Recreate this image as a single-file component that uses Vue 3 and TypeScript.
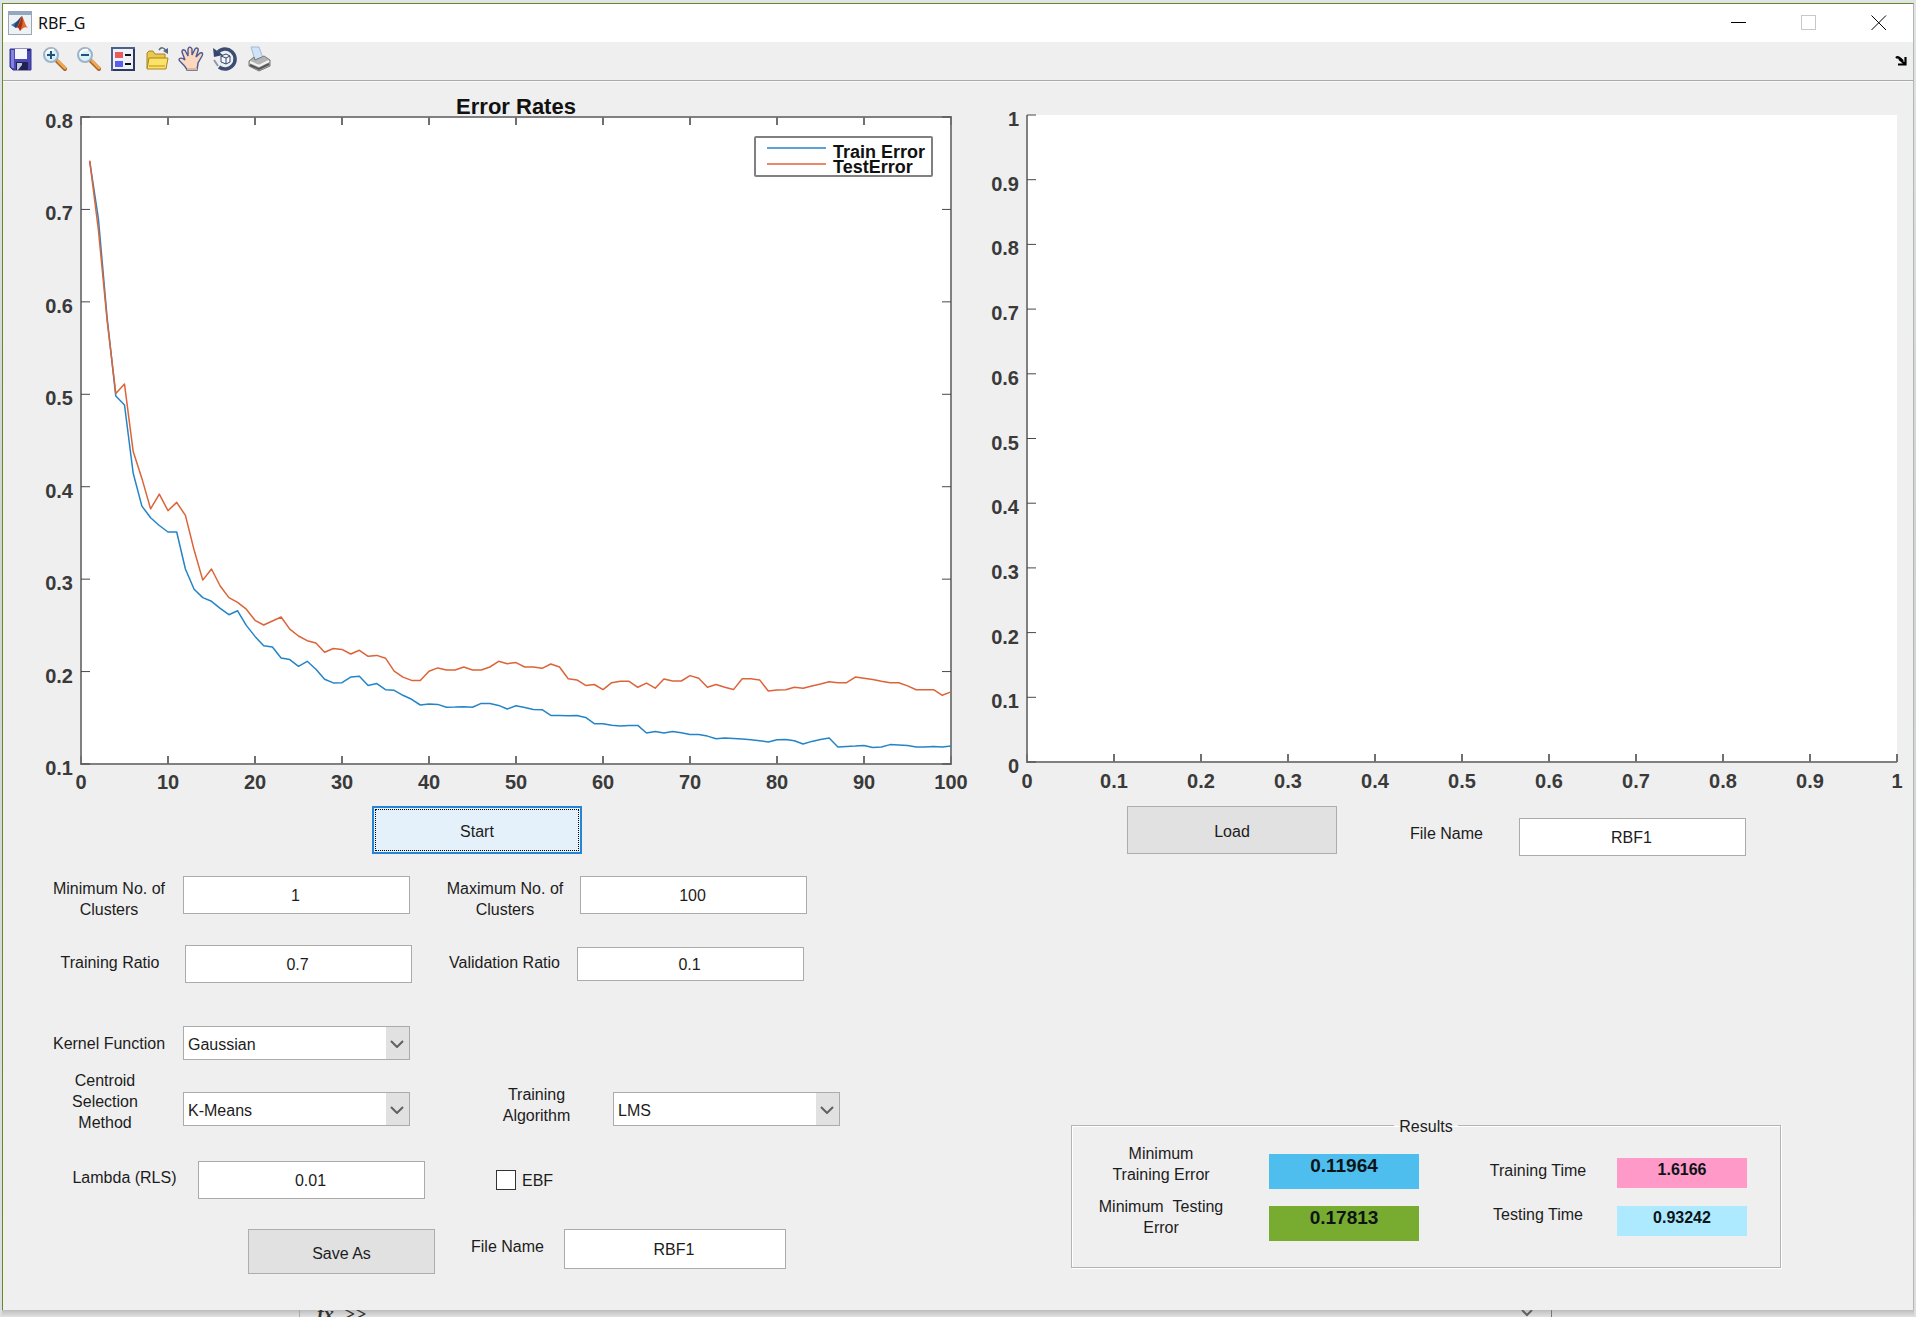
<script setup lang="ts">
import { ref } from 'vue'

interface Tick {
  label: string
  pos: number
}

const trainError: number[] = [
  0.752, 0.69, 0.583, 0.498, 0.4884, 0.4145, 0.379, 0.3664, 0.358, 0.351,
  0.351, 0.311, 0.289, 0.28, 0.276, 0.2685, 0.2615, 0.2658, 0.25, 0.238,
  0.228, 0.2266, 0.2147, 0.213, 0.2057, 0.2111, 0.2025, 0.1916, 0.1877, 0.188,
  0.194, 0.195, 0.185, 0.187, 0.1804, 0.1797, 0.1743, 0.17, 0.1638, 0.1649,
  0.1645, 0.1613, 0.1616, 0.162, 0.1613, 0.1656, 0.1656, 0.1634, 0.1595, 0.163,
  0.161, 0.159, 0.1587, 0.1526, 0.1526, 0.1522, 0.1526, 0.1504, 0.1436, 0.1436,
  0.142, 0.141, 0.1418, 0.1418, 0.1335, 0.1353, 0.1335, 0.1353, 0.1338, 0.132,
  0.132, 0.1302, 0.1273, 0.128, 0.1277, 0.127, 0.1263, 0.1252, 0.1238, 0.1263,
  0.1266, 0.1252, 0.1216, 0.1245, 0.1266, 0.128, 0.1184, 0.119, 0.1194, 0.12,
  0.1177, 0.1184, 0.121, 0.1205, 0.12, 0.1184, 0.1184, 0.119, 0.1184, 0.1196,
]

const testError: number[] = [
  0.7527, 0.678, 0.58, 0.501, 0.511, 0.438, 0.409, 0.376, 0.392, 0.374,
  0.383, 0.369, 0.3315, 0.299, 0.311, 0.2926, 0.28, 0.275, 0.2675, 0.2555,
  0.2504, 0.2547, 0.259, 0.246, 0.2385, 0.2334, 0.231, 0.221, 0.225, 0.224,
  0.219, 0.223, 0.2165, 0.2175, 0.2145, 0.2004, 0.194, 0.1905, 0.1905, 0.2004,
  0.204, 0.2017, 0.2017, 0.205, 0.2017, 0.2017, 0.205, 0.2111, 0.2085, 0.2097,
  0.205, 0.205, 0.2035, 0.2082, 0.205, 0.1923, 0.191, 0.185, 0.186, 0.1805,
  0.188, 0.1895, 0.1895, 0.183, 0.1875, 0.182, 0.192, 0.1898, 0.1898, 0.1956,
  0.1928, 0.183, 0.186, 0.183, 0.1805, 0.1923, 0.1923, 0.191, 0.179, 0.1802,
  0.1804, 0.183, 0.182, 0.1845, 0.1866, 0.189, 0.188, 0.188, 0.194, 0.1927,
  0.1914, 0.1895, 0.188, 0.188, 0.1845, 0.1804, 0.1804, 0.1804, 0.1743, 0.178,
]

// Plot boxes, in the units of each chart's viewBox
const errors = { left: 78, right: 948, top: 34, bottom: 681 }
const blank = { left: 42, right: 912, top: 32, bottom: 679 }

const errorX = (n: number): number => errors.left + (n / 100) * (errors.right - errors.left)
const errorY = (v: number): number =>
  errors.bottom - ((v - 0.1) / 0.7) * (errors.bottom - errors.top)

const toPoints = (series: number[]): string =>
  series.map((v, i) => `${errorX(i + 1).toFixed(1)},${errorY(v).toFixed(1)}`).join(' ')

const errorXTicks: Tick[] = Array.from({ length: 11 }, (_, i) => ({
  label: String(i * 10),
  pos: errorX(i * 10),
}))
const errorYTicks: Tick[] = Array.from({ length: 8 }, (_, i) => ({
  label: ((i + 1) / 10).toFixed(1),
  pos: errorY((i + 1) / 10),
}))

const unitLabel = (i: number): string => (i % 10 === 0 ? String(i / 10) : (i / 10).toFixed(1))
const blankXTicks: Tick[] = Array.from({ length: 11 }, (_, i) => ({
  label: unitLabel(i),
  pos: blank.left + (i / 10) * (blank.right - blank.left),
}))
const blankYTicks: Tick[] = Array.from({ length: 11 }, (_, i) => ({
  label: unitLabel(i),
  pos: blank.bottom - (i / 10) * (blank.bottom - blank.top),
}))

const minClusters = ref('1')
const maxClusters = ref('100')
const trainingRatio = ref('0.7')
const validationRatio = ref('0.1')
const lambda = ref('0.01')
const saveName = ref('RBF1')
const loadName = ref('RBF1')
const kernel = ref('Gaussian')
const centroid = ref('K-Means')
const algorithm = ref('LMS')
const ebf = ref(false)
</script>

<template>
  <div class="desktop">
    <main class="window">
      <header class="titlebar">
        <svg class="app-icon" viewBox="0 0 24 24" aria-hidden="true">
          <rect x="0.5" y="0.5" width="23" height="23" fill="#eef2f6" stroke="#9aa8b6" />
          <rect x="1" y="1" width="22" height="3" fill="#93a9c0" />
          <path d="M3 14 L8 11 L11 13 L8 17 Z" fill="#3f79b5" />
          <path d="M8 11 C10 10 12 6 14 5 L11 14 L8 17 L6 15 Z" fill="#27486f" />
          <path d="M14 5 C16 8 17 14 20 17 C17 15 15 17 12 20 C11 17 10 16 8 17 C11 14 12 8 14 5 Z" fill="#e0692a" />
          <path d="M14 5 C15 9 15 14 12 20 C11 17 10 16 9 16 C12 13 13 8 14 5 Z" fill="#a5301a" />
        </svg>
        <h1 class="title">RBF_G</h1>
        <div class="window-buttons">
          <button type="button" aria-label="Minimize">
            <svg viewBox="0 0 16 16"><path d="M0 7.5H15" stroke="#000" fill="none" /></svg>
          </button>
          <button type="button" aria-label="Maximize" disabled>
            <svg viewBox="0 0 16 16"><rect x="0.5" y="0.5" width="14" height="14" stroke="#c8c8cc" fill="none" /></svg>
          </button>
          <button type="button" aria-label="Close">
            <svg viewBox="0 0 16 16"><path d="M0.5 0.5L15 15M15 0.5L0.5 15" stroke="#000" fill="none" /></svg>
          </button>
        </div>
      </header>

      <nav class="toolbar" aria-label="Figure tools">
        <button type="button" aria-label="Save figure">
          <svg viewBox="0 0 26 26">
            <path d="M2 3H23V24H5L2 21Z" fill="#4a48b4" stroke="#34328e" />
            <path d="M3 4H6V22H4L3 20Z" fill="#8583dc" />
            <rect x="7" y="3" width="12" height="10" fill="#f4f6fc" />
            <path d="M19 3H22V5H19Z" fill="#26246c" />
            <rect x="8" y="16" width="12" height="8" fill="#23224e" />
            <rect x="9" y="17" width="5" height="7" fill="#c4c8e4" />
            <path d="M10 24L14 19V24Z" fill="#23224e" />
          </svg>
        </button>
        <button type="button" aria-label="Zoom in">
          <svg viewBox="0 0 26 26">
            <path d="M15 15L23 23" stroke="#a9652a" stroke-width="4" stroke-linecap="round" />
            <path d="M16 15L23 22" stroke="#f0a850" stroke-width="2.500" stroke-linecap="round" />
            <circle cx="9" cy="9" r="7" fill="#d8f2fa" stroke="#9db3c6" stroke-width="2" />
            <path d="M4 8C5 5 8 3 12 4" stroke="#fff" stroke-width="2" fill="none" />
            <path d="M5 9H13M9 5V13" stroke="#26517c" stroke-width="2" />
          </svg>
        </button>
        <button type="button" aria-label="Zoom out">
          <svg viewBox="0 0 26 26">
            <path d="M15 15L23 23" stroke="#a9652a" stroke-width="4" stroke-linecap="round" />
            <path d="M16 15L23 22" stroke="#f0a850" stroke-width="2.500" stroke-linecap="round" />
            <circle cx="9" cy="9" r="7" fill="#d8f2fa" stroke="#9db3c6" stroke-width="2" />
            <path d="M4 8C5 5 8 3 12 4" stroke="#fff" stroke-width="2" fill="none" />
            <path d="M5 9H13" stroke="#26517c" stroke-width="2" />
          </svg>
        </button>
        <button type="button" aria-label="Insert legend">
          <svg viewBox="0 0 26 26">
            <rect x="2" y="2" width="22" height="22" fill="#eef0fa" stroke="#4e5f8c" stroke-width="2" />
            <path d="M24 3V24H3" fill="none" stroke="#2c3a62" stroke-width="2" />
            <rect x="5" y="6" width="8" height="6" fill="#e85a5e" />
            <rect x="5" y="15" width="8" height="6" fill="#5c5cf0" />
            <path d="M15 9H21M15 18H21" stroke="#111" stroke-width="2" />
          </svg>
        </button>
        <button type="button" aria-label="Open file">
          <svg viewBox="0 0 26 26">
            <path d="M3 22V7L5 5H9L11 8H21V12" fill="#e9c84a" stroke="#a88420" />
            <path d="M3 23L5 12H24L22 23Z" fill="#fbe36a" stroke="#a88420" />
            <path d="M5 20H21" stroke="#dfb93a" stroke-width="2" />
            <path d="M15 4C17 1 20 1 22 5" fill="none" stroke="#56677c" stroke-width="1.500" />
            <path d="M19 5L24 2V8Z" fill="#56677c" />
          </svg>
        </button>
        <button type="button" aria-label="Pan">
          <svg viewBox="0 0 26 26">
            <path
              d="M9 24C8 20 2 16 1 14C1 11 5 12 7 14L4 6C4 3 7 3 8 6L10 10L10 3C11 0 13 1 14 3L14 9L17 3C18 1 21 2 20 5L18 11L22 7C25 6 25 8 24 10L20 17C20 20 19 21 19 24Z"
              fill="#fbd8bf" stroke="#4c5a94" stroke-width="1.400"
            />
            <path d="M9 23H19" stroke="#e8b494" stroke-width="2" />
          </svg>
        </button>
        <button type="button" aria-label="Rotate">
          <svg viewBox="0 0 26 26">
            <path d="M6 6A10 10 0 1 1 7 21" fill="none" stroke="#3c4d74" stroke-width="3.500" />
            <path d="M1 2L2 11L11 9Z" fill="#34466e" />
            <path d="M2 14L6 20" stroke="#8c98b0" stroke-width="2" />
            <path d="M9 10L14 8L18 10V16L14 18L9 16ZM9 10L14 12L18 10M14 12V18" fill="#f3f6fc" stroke="#34466e" />
          </svg>
        </button>
        <button type="button" aria-label="Print">
          <svg viewBox="0 0 26 26">
            <path d="M5 1H13L17 12L9 14Z" fill="#cfe4fa" stroke="#a4b8d0" />
            <path d="M3 15L8 11L9 14L18 10L24 14V20L13 25L3 20Z" fill="#b4b4b4" stroke="#777" />
            <path d="M4 16L13 20L23 15" fill="none" stroke="#f4f4f4" stroke-width="2" />
            <path d="M4 19L13 23L23 18" fill="none" stroke="#555" stroke-width="2" />
          </svg>
        </button>
        <button type="button" class="dock" aria-label="Dock figure">
          <svg viewBox="0 0 12 10"><path d="M1 2C3 0 5 2 8 5M10.500 1V8.500H3M4 3L10 8" stroke="#000" stroke-width="2.200" fill="none" /></svg>
        </button>
      </nav>

      <div class="columns">
        <section class="column">
          <svg class="chart" viewBox="0 0 982 711" role="img" aria-label="Error Rates">
            <rect
              :x="errors.left" :y="errors.top" :width="errors.right - errors.left"
              :height="errors.bottom - errors.top" class="plot-box"
            />
            <text class="chart-title" x="513" y="31">Error Rates</text>
            <g v-for="t in errorXTicks" :key="'x' + t.label">
              <path
                class="tick-x"
                :d="`M${t.pos} ${errors.top}v8M${t.pos} ${errors.bottom}v-8`"
              />
              <text class="axis-text mid" :x="t.pos" :y="errors.bottom + 25">{{ t.label }}</text>
            </g>
            <g v-for="t in errorYTicks" :key="'y' + t.label">
              <path
                class="tick-y"
                :d="`M${errors.left} ${t.pos}h9M${errors.right} ${t.pos}h-9`"
              />
              <text class="axis-text end" :x="errors.left - 8" :y="t.pos + 11">{{ t.label }}</text>
            </g>
            <polyline class="line train" :points="toPoints(trainError)" />
            <polyline class="line test" :points="toPoints(testError)" />
            <rect class="legend-box" x="752" y="54" width="177" height="39" rx="1" />
            <path class="line train" d="M764 65H823" />
            <path class="line test" d="M764 81H823" />
            <text class="legend-text" x="830" y="75">Train Error</text>
            <text class="legend-text" x="830" y="90">TestError</text>
          </svg>

          <form class="form" @submit.prevent>
            <div class="row start-row">
              <button type="button" class="btn wide focused">Start</button>
            </div>

            <div class="row clusters">
              <label for="min-clusters" class="first">Minimum No. of<br />Clusters</label>
              <input id="min-clusters" v-model="minClusters" type="text" />
              <label for="max-clusters" class="second">Maximum No. of<br />Clusters</label>
              <input id="max-clusters" v-model="maxClusters" type="text" />
            </div>

            <div class="row ratios">
              <label for="training-ratio" class="first">Training Ratio</label>
              <input id="training-ratio" v-model="trainingRatio" type="text" />
              <label for="validation-ratio" class="second">Validation Ratio</label>
              <input id="validation-ratio" v-model="validationRatio" type="text" class="short" />
            </div>

            <div class="row kernel">
              <label for="kernel" class="first">Kernel Function</label>
              <div class="select">
                <select id="kernel" v-model="kernel"><option>Gaussian</option></select>
                <svg viewBox="0 0 14 8"><path d="M1 1L7 7L13 1" /></svg>
              </div>
            </div>

            <div class="row methods">
              <label for="centroid" class="centroid">Centroid<br />Selection<br />Method</label>
              <div class="select">
                <select id="centroid" v-model="centroid"><option>K-Means</option></select>
                <svg viewBox="0 0 14 8"><path d="M1 1L7 7L13 1" /></svg>
              </div>
              <label for="algorithm" class="algorithm">Training<br />Algorithm</label>
              <div class="select">
                <select id="algorithm" v-model="algorithm"><option>LMS</option></select>
                <svg viewBox="0 0 14 8"><path d="M1 1L7 7L13 1" /></svg>
              </div>
            </div>

            <div class="row lambda">
              <label for="lambda" class="lambda-label">Lambda (RLS)</label>
              <input id="lambda" v-model="lambda" type="text" />
              <label class="check"><input v-model="ebf" type="checkbox" />EBF</label>
            </div>

            <div class="row save">
              <button type="button" class="btn save-btn">Save As</button>
              <label for="save-name">File Name</label>
              <input id="save-name" v-model="saveName" type="text" />
            </div>
          </form>
        </section>

        <section class="column">
          <svg class="chart" viewBox="0 0 928 711" role="img" aria-label="Empty axes">
            <rect
              :x="blank.left" :y="blank.top" :width="blank.right - blank.left"
              :height="blank.bottom - blank.top" fill="#fff"
            />
            <path class="axis" :d="`M${blank.left} ${blank.top}V${blank.bottom}H${blank.right}`" />
            <g v-for="t in blankXTicks" :key="'x' + t.label">
              <path class="tick-x" :d="`M${t.pos} ${blank.bottom}v-8`" />
              <text class="axis-text mid" :x="t.pos" :y="blank.bottom + 26">{{ t.label }}</text>
            </g>
            <g v-for="t in blankYTicks" :key="'y' + t.label">
              <path class="tick-y" :d="`M${blank.left} ${t.pos}h9`" />
              <text class="axis-text end" :x="blank.left - 8" :y="t.pos + 11">{{ t.label }}</text>
            </g>
          </svg>

          <form class="load" @submit.prevent>
            <button type="button" class="btn wide">Load</button>
            <label for="load-name">File Name</label>
            <input id="load-name" v-model="loadName" type="text" />
          </form>

          <fieldset class="results">
            <legend>Results</legend>
            <div class="result-grid">
              <div class="result-labels">
                <span>Minimum<br />Training Error</span>
                <span>Minimum &nbsp;Testing<br />Error</span>
              </div>
              <div class="outputs errors">
                <output class="sky">0.11964</output>
                <output class="green">0.17813</output>
              </div>
              <div class="result-labels times">
                <span>Training Time</span>
                <span>Testing Time</span>
              </div>
              <div class="outputs durations">
                <output class="pink">1.6166</output>
                <output class="cyan">0.93242</output>
              </div>
            </div>
          </fieldset>
        </section>
      </div>
    </main>
    <footer class="behind">
      <span class="prompt"><i>fx</i> &nbsp;&gt;&gt;</span>
      <span class="scroll"><svg viewBox="0 0 12 7"><path d="M1 0L6 5L11 0" /></svg></span>
    </footer>
  </div>
</template>

<style>
body {
  margin: 0;
}
</style>

<style scoped>
.desktop {
  box-sizing: border-box;
  min-height: 100vh;
  display: flex;
  flex-direction: column;
  padding: 3px 2px 0;
  background: linear-gradient(#dfe4e6, #cdd6cf 40%, #dcdfe0);
  font: 16px/21px "Liberation Sans", Arial, sans-serif;
  color: #1c1c1c;
}
.window {
  flex: 1;
  background: #efefef;
  border-top: 1px solid #6b8527;
  border-left: 1px solid #6b8527;
  border-right: 1px solid #b5b5b5;
}
.titlebar {
  display: flex;
  align-items: center;
  height: 38px;
  padding-left: 5px;
  background: #fff;
}
.app-icon {
  width: 24px;
  height: 24px;
}
.title {
  margin: 0 auto 0 6px;
  font: 16px/24px "Noto Sans", "Open Sans", sans-serif;
  color: #111;
}
.window-buttons {
  display: flex;
  gap: 54px;
  padding-right: 26px;
}
.window-buttons button,
.toolbar button {
  display: block;
  padding: 0;
  border: 0;
  background: none;
}
.window-buttons svg {
  display: block;
  width: 16px;
  height: 16px;
}
.toolbar {
  display: flex;
  align-items: center;
  gap: 8px;
  height: 38px;
  padding: 0 6px 0 5px;
  border-bottom: 1px solid #a9a9a9;
  box-shadow: 0 1px 0 #fafafa;
  margin-bottom: 2px;
}
.toolbar button {
  width: 26px;
  height: 26px;
  margin-bottom: 4px;
}
.toolbar svg {
  display: block;
  width: 100%;
  height: 100%;
}
.toolbar .dock {
  width: 12px;
  height: 10px;
  margin: 0 0 0 auto;
}
.columns {
  display: grid;
  grid-template-columns: 982fr 928fr;
}
.column {
  min-width: 0;
}
.chart {
  display: block;
  width: 100%;
  height: auto;
}
.chart text {
  font-family: "Liberation Sans", Arial, sans-serif;
  font-weight: bold;
}
.plot-box,
.legend-box {
  fill: #fff;
  stroke: #808080;
  stroke-width: 2;
}
.axis {
  fill: none;
  stroke: #808080;
  stroke-width: 2;
}
.tick-x {
  stroke: #707070;
  stroke-width: 2;
}
.tick-y {
  stroke: #484848;
  stroke-width: 1;
}
.axis-text {
  font-size: 20px;
  fill: #3a3a3a;
}
.mid,
.chart-title {
  text-anchor: middle;
}
.end {
  text-anchor: end;
}
.chart-title {
  font-size: 22px;
  fill: #111;
}
.legend-text {
  font-size: 18px;
  fill: #111;
}
.line {
  fill: none;
  stroke-width: 1.5;
  stroke-linejoin: round;
}
.train {
  stroke: #2484c8;
}
.test {
  stroke: #dc6438;
}
label,
.result-labels span {
  text-align: center;
}
input[type="text"],
select {
  box-sizing: border-box;
  width: 227px;
  height: 38px;
  margin: 0;
  border: 1px solid #ababab;
  border-radius: 0;
  background: #fff;
  color: inherit;
  font: inherit;
}
input[type="text"] {
  padding: 2px 2px 0 0;
  text-align: center;
}
input.short {
  height: 34px;
}
.btn {
  box-sizing: border-box;
  height: 48px;
  padding: 3px 0 0;
  border: 1px solid #adadad;
  background: #e1e1e1;
  color: inherit;
  font: inherit;
}
.btn.wide {
  width: 210px;
}
.btn.focused {
  border: 2px solid #2484d8;
  background: #e4f1fb;
  outline: 1px dotted #000;
  outline-offset: -4px;
}
.row {
  display: grid;
  align-items: center;
}
.form {
  padding: 12px 0 35px 44px;
}
.start-row {
  padding-left: 325px;
  margin-bottom: 22px;
}
.first {
  padding-right: 12px;
}
.second {
  padding-left: 20px;
}
.clusters {
  grid-template-columns: 136px 227px 170px 227px;
  align-items: start;
  margin-bottom: 25px;
}
.clusters label {
  padding-top: 2px;
}
.ratios {
  grid-template-columns: 138px 227px 165px 227px;
  margin-bottom: 43px;
}
.ratios label {
  padding-bottom: 4px;
}
.kernel {
  grid-template-columns: 136px 227px;
  margin-bottom: 10px;
}
.methods {
  grid-template-columns: 136px 227px 203px 227px;
  align-items: end;
  margin-bottom: 27px;
}
.centroid {
  padding: 0 20px 1px 0;
}
.algorithm {
  padding: 0 0 8px 50px;
}
.methods .select {
  margin-bottom: 8px;
}
.select {
  position: relative;
}
.select select {
  display: block;
  height: 34px;
  padding: 2px 28px 0 4px;
  appearance: none;
  background: linear-gradient(to left, #e1e1e1 23px, #fff 23px);
}
.select svg {
  position: absolute;
  right: 6px;
  top: 14px;
  width: 14px;
  height: 8px;
  pointer-events: none;
}
.select path,
.scroll path {
  fill: none;
  stroke: #606060;
  stroke-width: 2;
}
.lambda {
  grid-template-columns: 151px 227px auto;
  margin-bottom: 30px;
}
.lambda-label {
  padding: 0 0 6px 4px;
}
.check {
  display: flex;
  align-items: center;
  gap: 6px;
  padding-left: 71px;
}
.check input {
  box-sizing: border-box;
  width: 20px;
  height: 20px;
  margin: 0;
  border: 1px solid #333;
  background: #fff;
  appearance: none;
}
.save {
  display: flex;
  align-items: flex-start;
  padding-left: 201px;
}
.save label {
  padding: 7px 20px 0 36px;
}
.save-btn {
  width: 187px;
  height: 45px;
}
.save input[type="text"] {
  width: 222px;
  height: 40px;
}
.load {
  display: flex;
  align-items: flex-start;
  padding: 12px 0 0 142px;
  margin-bottom: 258px;
}
.load label {
  padding: 17px 36px 0 73px;
}
.load input {
  margin-top: 12px;
}
.results {
  box-sizing: border-box;
  width: 710px;
  height: 154px;
  margin: 0 0 0 86px;
  padding: 0;
  border: 1px solid #b4b4b4;
  box-shadow: 1px 1px 0 #fff, inset 1px 1px 0 #fff;
}
.results legend {
  margin: 0 auto;
  padding: 2px 5px 0;
}
.result-grid {
  display: flex;
  align-items: flex-start;
  padding: 6px 0 0 14px;
}
.result-labels {
  display: flex;
  flex-direction: column;
  gap: 11px;
  width: 150px;
}
.result-labels.times {
  box-sizing: border-box;
  gap: 23px;
  width: 198px;
  padding: 17px 7px 0 47px;
}
.outputs {
  display: flex;
  flex-direction: column;
  gap: 17px;
  padding-top: 11px;
}
.errors {
  width: 150px;
  margin-left: 33px;
}
.durations {
  width: 130px;
  gap: 18px;
  padding-top: 15px;
}
.outputs output {
  box-sizing: border-box;
  height: 35px;
  font-size: 19px;
  line-height: 24px;
  font-weight: bold;
  text-align: center;
  color: #0c1418;
}
.durations output {
  height: 30px;
  font-size: 16px;
}
.sky {
  background: #4dbeee;
}
.green {
  background: #77ac30;
}
.pink {
  background: #ff99c8;
}
.cyan {
  background: #aeeaff;
}
.behind {
  display: flex;
  justify-content: space-between;
  height: 7px;
  overflow: hidden;
  padding: 0 362px 0 297px;
  background: linear-gradient(#bdbdbd, #e2e2e2);
}
.prompt {
  border-left: 1px solid #aaa;
  padding-left: 17px;
  font: bold 20px/8px "Liberation Serif", serif;
  color: #333;
}
.scroll {
  border-right: 1px solid #777;
  padding-right: 18px;
}
.scroll svg {
  display: block;
  width: 12px;
  height: 7px;
}
</style>
